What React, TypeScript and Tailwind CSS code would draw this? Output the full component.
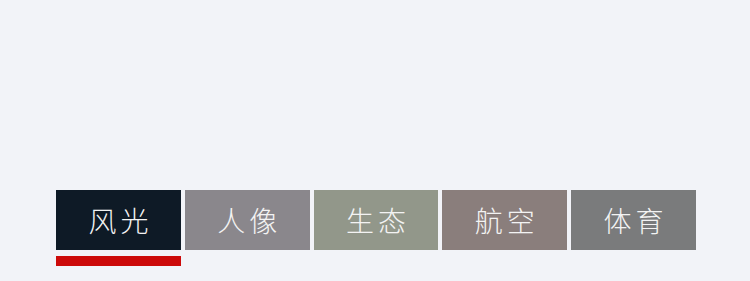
const tabs = [
  { label: "风光", bg: "bg-[#0e1a26]" },
  { label: "人像", bg: "bg-[#8a878c]" },
  { label: "生态", bg: "bg-[#92978a]" },
  { label: "航空", bg: "bg-[#8a7e7c]" },
  { label: "体育", bg: "bg-[#7a7b7c]" },
];

export default function App() {
  return (
    <div className="h-[281px] w-[750px] bg-[#f2f3f8] pl-[56px] pt-[190px] font-['Noto_Sans_CJK_SC',sans-serif]">
      <div className="flex gap-[4px]">
        {tabs.map((t, i) => (
          <div key={t.label} className="flex w-[124.8px] flex-col">
            <div
              className={`flex h-[60px] items-center justify-center pl-[4px] text-[28px] font-light tracking-[4px] text-[#f3f3f3] ${t.bg}`}
            >
              {t.label}
            </div>
            {i === 0 && <div className="mt-[6px] h-[10px] bg-[#cc0a0a]" />}
          </div>
        ))}
      </div>
    </div>
  );
}
